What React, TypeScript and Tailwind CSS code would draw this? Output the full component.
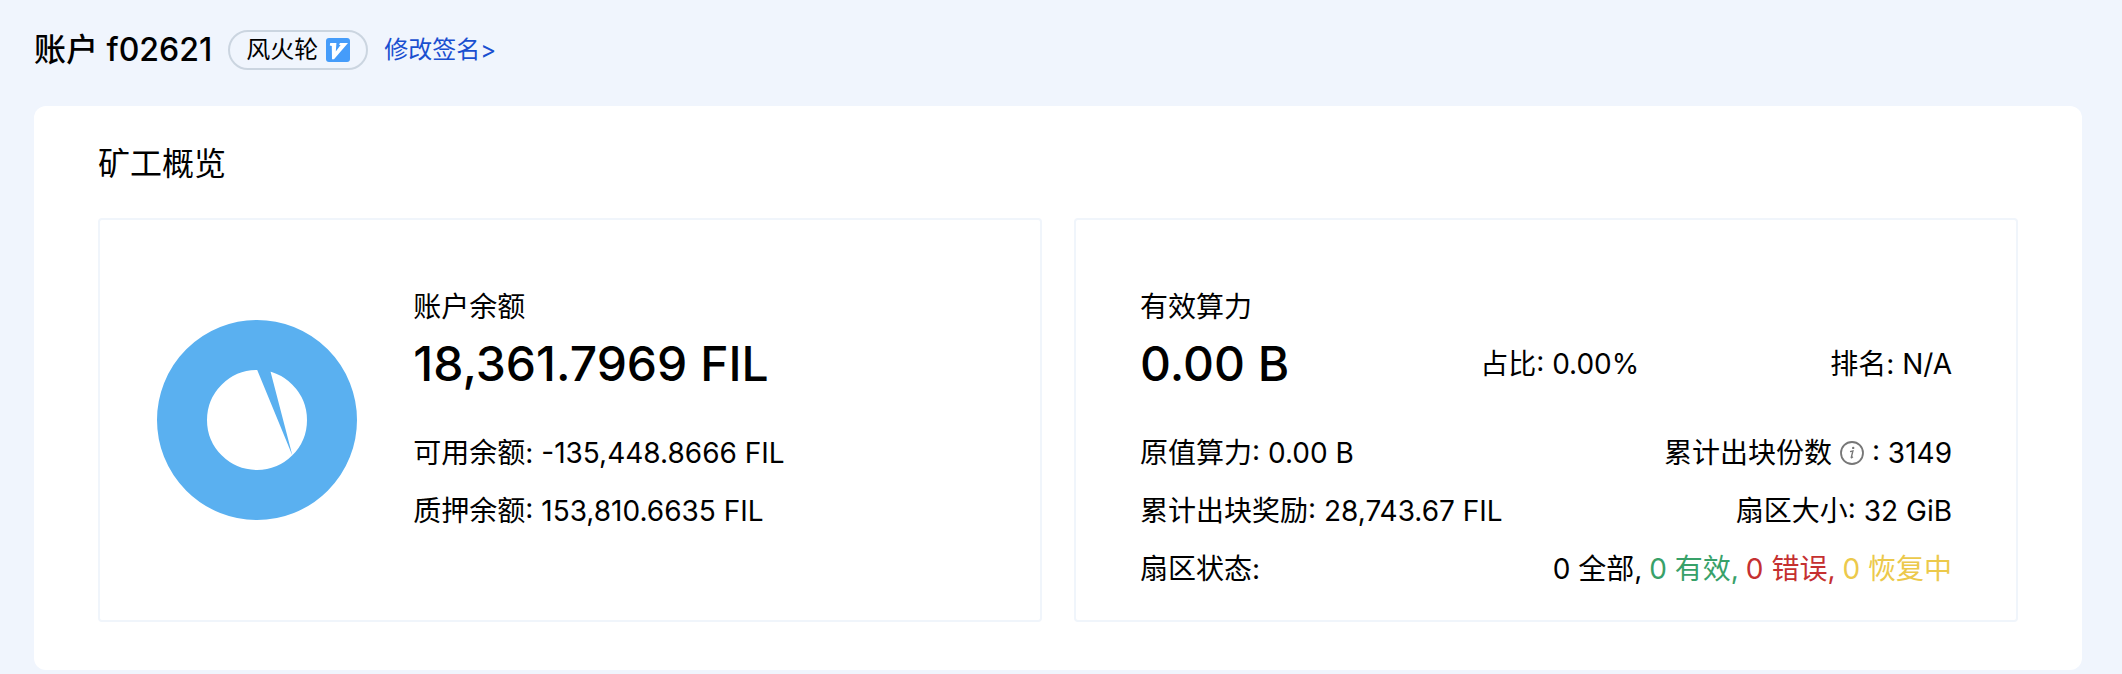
import type { ReactNode } from 'react';

const sectors = [
  { text: '0 全部,', color: 'text-black' },
  { text: '0 有效,', color: 'text-[#38a169]' },
  { text: '0 错误,', color: 'text-[#c53030]' },
  { text: '0 恢复中', color: 'text-[#ecc94b]' },
];

function VerifiedIcon() {
  return (
    <svg viewBox="0 0 24 24" className="size-6 shrink-0" aria-hidden="true">
      <rect width="24" height="24" rx="3" fill="#459cfa" />
      <path d="M4.2 5h6.2l-.6 8.6L14.6 7l-1.6-.3L14 5h8L8 21.2H6L5.8 8 3.8 7.4Z" fill="#fff" />
    </svg>
  );
}

function InfoIcon() {
  return (
    <svg viewBox="0 0 24 24" className="size-6" aria-hidden="true">
      <circle cx="12" cy="12" r="11" fill="none" stroke="#777" strokeWidth="1.8" />
      <circle cx="13.2" cy="6.9" r="1.2" fill="#777" />
      <path d="M10 10.6l2.9-.6-1.6 6.3q-.3 1.2 1.6-.5" fill="none" stroke="#777" strokeWidth="1.4" />
    </svg>
  );
}

function BalanceChart() {
  return (
    <svg viewBox="0 0 200 200" className="size-[200px]" role="img" aria-label="账户余额">
      <circle cx="100" cy="100" r="75" fill="none" stroke="#5ab0f0" strokeWidth="50" />
      <path d="M100 49.5L135.4 135.4L113.5 51.5L113.5 46L100 46Z" fill="#5ab0f0" />
    </svg>
  );
}

function Row({ children }: { children: ReactNode }) {
  return <div className="flex items-center justify-between">{children}</div>;
}

export default function App() {
  return (
    <main className="min-h-screen bg-[#f0f5fd] pl-[34px] pr-10 pb-1 font-['Inter','Noto_Sans_CJK_SC',sans-serif] text-[28px] leading-[42px] text-black">
      <header className="flex items-center pt-[26px] pb-8">
        <h1 className="text-[32px] leading-[48px] font-medium">账户 f02621</h1>
        <span className="ml-4 flex h-10 items-center gap-2 rounded-full border-2 border-[#cbd5e0] px-4 text-2xl">
          风火轮
          <VerifiedIcon />
        </span>
        <a href="#signature" className="ml-4 text-2xl text-[#1a4fd0]">修改签名&gt;</a>
      </header>

      <section className="rounded-xl bg-white px-16 pb-12">
        <h2 className="pt-[34px] pb-[30px] text-[32px] leading-[48px]">矿工概览</h2>
        <div className="grid grid-cols-2 gap-8">
          {/* Balance */}
          <div className="grid grid-cols-3 rounded border-2 border-[#f0f5fb]">
            <div className="flex items-center justify-center">
              <BalanceChart />
            </div>
            <div className="col-span-2 pt-[66px] pb-[30px]">
              <p>账户余额</p>
              <p className="text-5xl leading-[72px] font-medium">18,361.7969 FIL</p>
              <div className="mt-8 space-y-4">
                <p>可用余额: -135,448.8666 FIL</p>
                <p>质押余额: 153,810.6635 FIL</p>
              </div>
            </div>
          </div>

          {/* Power */}
          <div className="rounded border-2 border-[#f0f5fb] px-16 pt-[66px] pb-[30px]">
            <p>有效算力</p>
            <Row>
              <p className="text-5xl leading-[72px] font-medium">0.00 B</p>
              <p>占比: 0.00%</p>
              <p>排名: N/A</p>
            </Row>
            <div className="mt-8 space-y-4">
              <Row>
                <p>原值算力: 0.00 B</p>
                <p className="flex items-center gap-2">
                  累计出块份数
                  <InfoIcon />
                  <span>: 3149</span>
                </p>
              </Row>
              <Row>
                <p>累计出块奖励: 28,743.67 FIL</p>
                <p>扇区大小: 32 GiB</p>
              </Row>
              <Row>
                <p>扇区状态:</p>
                <p className="flex gap-[7px]">
                  {sectors.map((s) => (
                    <span key={s.text} className={s.color}>{s.text}</span>
                  ))}
                </p>
              </Row>
            </div>
          </div>
        </div>
      </section>
    </main>
  );
}
